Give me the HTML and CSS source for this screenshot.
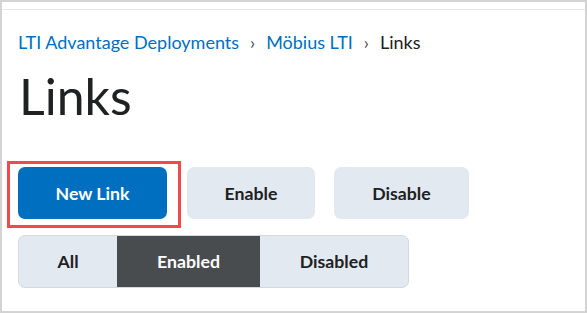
FILE: index.html
```html
<!DOCTYPE html>
<html lang="en">
<head>
<meta charset="utf-8">
<link rel="stylesheet" href="styles.css">
</head>
<body>
<div class="frame">
  <div class="topline"></div>
  <main class="content">
    <nav class="breadcrumbs">
      <a class="crumb" href="#">LTI Advantage Deployments</a>
      <span class="sep">›</span>
      <a class="crumb" href="#">Möbius LTI</a>
      <span class="sep">›</span>
      <span class="current">Links</span>
    </nav>
    <h1 class="title">Links</h1>
    <div class="actions">
      <button class="btn btn-primary highlighted">New Link</button>
      <button class="btn">Enable</button>
      <button class="btn btn-wide">Disable</button>
    </div>
    <div class="segmented">
      <button class="seg seg-all">All</button>
      <button class="seg seg-enabled active">Enabled</button>
      <button class="seg seg-disabled">Disabled</button>
    </div>
  </main>
</div>
</body>
</html>
```
FILE: styles.css
```css
* { box-sizing: border-box; }
html, body { margin: 0; padding: 0; background: #ffffff; }
body { font-family: Lato, "Noto Sans", sans-serif; color: #202122; }

.frame {
  width: 587px;
  height: 313px;
  border: 2px solid #d3d3d3;
  background: #fff;
  overflow: hidden;
}
.topline {
  height: 8px;
  border-bottom: 1px solid #e6e6e6;
}
.content {
  padding: 20px 16px 0 16px;
  display: flex;
  flex-direction: column;
  align-items: flex-start;
}
.breadcrumbs {
  display: flex;
  align-items: baseline;
  font-size: 18px;
  line-height: 24px;
}
.crumb { color: #006fbf; text-decoration: none; }
.sep { color: #494c4e; margin: 0 11px; }
.current { color: #202122; }

.title {
  margin: 12px 0 0 1px;
  font-size: 50px;
  line-height: 60px;
  font-weight: 400;
  color: #202122;
}

.actions {
  margin-top: 41px;
  display: flex;
  gap: 20px;
}
.btn {
  font-family: Lato, "Noto Sans", sans-serif;
  font-weight: 700;
  font-size: 17.7px;
  height: 52px;
  width: 128px;
  border: none;
  border-radius: 7px;
  background: #e3e9f1;
  color: #202122;
  padding: 0;
}
.btn-wide { width: 135px; margin-left: -1px; }
.btn-primary { background: #006fbf; color: #fff; width: 149px; }
.highlighted { position: relative; }
.highlighted::after {
  content: "";
  position: absolute;
  top: -6px; left: -11px; right: -14px; bottom: -9px;
  border: 3px solid #f04a4a;
  pointer-events: none;
}

.segmented {
  margin-top: 16px;
  display: flex;
  height: 53px;
  border: 1px solid #d3d9e0;
  border-radius: 7px;
  background: #e3e9f1;
  overflow: hidden;
}
.seg {
  font-family: Lato, "Noto Sans", sans-serif;
  font-weight: 700;
  font-size: 17.7px;
  border: none;
  background: transparent;
  color: #202122;
  padding: 0;
  height: 100%;
}
.seg-all { width: 98px; }
.seg-enabled { width: 143px; }
.seg-disabled { width: 148px; }
.seg.active { background: #494c4e; color: #fff; }
```
